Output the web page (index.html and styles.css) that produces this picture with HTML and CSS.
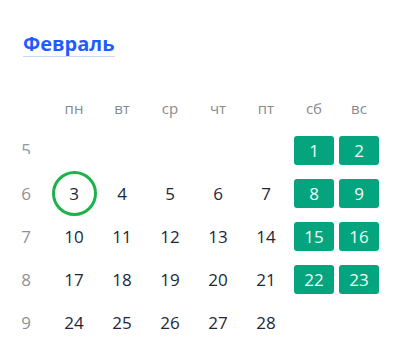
FILE: index.html
```html
<!DOCTYPE html>
<html lang="ru">
<head>
<meta charset="utf-8">
<link rel="stylesheet" href="styles.css">
</head>
<body>
<div class="month">
  <div class="title-row"><h2 class="title">Февраль</h2></div>
  <div class="grid">
    <div class="cell"></div>
    <div class="cell head">пн</div>
    <div class="cell head">вт</div>
    <div class="cell head">ср</div>
    <div class="cell head">чт</div>
    <div class="cell head">пт</div>
    <div class="cell head">сб</div>
    <div class="cell head">вс</div>

    <div class="cell week"><span class="clip"><span>5</span></span></div>
    <div class="cell"></div>
    <div class="cell"></div>
    <div class="cell"></div>
    <div class="cell"></div>
    <div class="cell"></div>
    <div class="cell"><span class="off">1</span></div>
    <div class="cell"><span class="off">2</span></div>

    <div class="cell week">6</div>
    <div class="cell day today">3</div>
    <div class="cell day">4</div>
    <div class="cell day">5</div>
    <div class="cell day">6</div>
    <div class="cell day">7</div>
    <div class="cell"><span class="off">8</span></div>
    <div class="cell"><span class="off">9</span></div>

    <div class="cell week">7</div>
    <div class="cell day">10</div>
    <div class="cell day">11</div>
    <div class="cell day">12</div>
    <div class="cell day">13</div>
    <div class="cell day">14</div>
    <div class="cell"><span class="off">15</span></div>
    <div class="cell"><span class="off">16</span></div>

    <div class="cell week">8</div>
    <div class="cell day">17</div>
    <div class="cell day">18</div>
    <div class="cell day">19</div>
    <div class="cell day">20</div>
    <div class="cell day">21</div>
    <div class="cell"><span class="off">22</span></div>
    <div class="cell"><span class="off">23</span></div>

    <div class="cell week">9</div>
    <div class="cell day">24</div>
    <div class="cell day">25</div>
    <div class="cell day">26</div>
    <div class="cell day">27</div>
    <div class="cell day">28</div>
    <div class="cell"></div>
    <div class="cell"></div>
  </div>
</div>
</body>
</html>
```
FILE: styles.css
```css
html, body {
  margin: 0;
  padding: 0;
  background: #ffffff;
}
body {
  font-family: "Open Sans", "Noto Sans", sans-serif;
  color: #1c2838;
}
.month {
  padding-top: 32px;
}
.title-row {
  padding-left: 23px;
  margin-bottom: 29px;
}
.title {
  display: inline-block;
  margin: 0;
  font-size: 20px;
  line-height: 24px;
  font-weight: 700;
  color: #1f5cff;
  border-bottom: 1px solid #c9d8ff;
}
.grid {
  display: grid;
  grid-template-columns: 48px repeat(6, 48px) 42px;
  grid-auto-rows: 43px;
  margin-left: 2px;
}
.cell {
  display: flex;
  align-items: center;
  justify-content: center;
  font-size: 17px;
  position: relative;
}
.head {
  font-size: 15px;
  color: #878a8e;
}
.week {
  font-size: 17px;
  color: #8f9294;
}
.clip {
  display: block;
  height: 12px;
  overflow: hidden;
  line-height: 22px;
  margin-top: -6px;
}
.clip span {
  display: block;
  margin-top: -3px;
  color: #8f9aa8;
}
.day {
  color: #1c2838;
}
.off {
  display: flex;
  align-items: center;
  justify-content: center;
  width: 40px;
  height: 29px;
  border-radius: 3px;
  background: #04a57e;
  color: #eefcf6;
  font-size: 17px;
}
.today::after {
  content: "";
  position: absolute;
  left: 50%;
  top: 50%;
  width: 39px;
  height: 39px;
  margin-left: -22px;
  margin-top: -23px;
  border: 3px solid #1db34a;
  border-radius: 50%;
}
```
